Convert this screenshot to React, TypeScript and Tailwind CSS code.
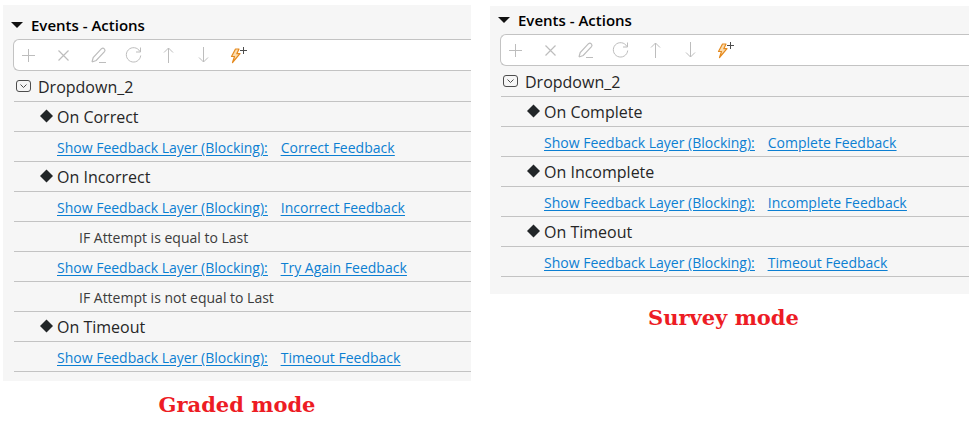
import { useState } from 'react'
import type { ReactNode } from 'react'

type Row =
  | { kind: 'event'; label: string }
  | { kind: 'action'; label: string; target: string }
  | { kind: 'condition'; label: string }

const SHOW_LAYER = 'Show Feedback Layer (Blocking):'

const gradedRows: Row[] = [
  { kind: 'event', label: 'On Correct' },
  { kind: 'action', label: SHOW_LAYER, target: 'Correct Feedback' },
  { kind: 'event', label: 'On Incorrect' },
  { kind: 'action', label: SHOW_LAYER, target: 'Incorrect Feedback' },
  { kind: 'condition', label: 'IF Attempt is equal to Last' },
  { kind: 'action', label: SHOW_LAYER, target: 'Try Again Feedback' },
  { kind: 'condition', label: 'IF Attempt is not equal to Last' },
  { kind: 'event', label: 'On Timeout' },
  { kind: 'action', label: SHOW_LAYER, target: 'Timeout Feedback' },
]

const surveyRows: Row[] = [
  { kind: 'event', label: 'On Complete' },
  { kind: 'action', label: SHOW_LAYER, target: 'Complete Feedback' },
  { kind: 'event', label: 'On Incomplete' },
  { kind: 'action', label: SHOW_LAYER, target: 'Incomplete Feedback' },
  { kind: 'event', label: 'On Timeout' },
  { kind: 'action', label: SHOW_LAYER, target: 'Timeout Feedback' },
]

const tools: { name: string; icon: ReactNode }[] = [
  { name: 'Add', icon: <path d="M12.5 6v13M6 12.5h13" /> },
  { name: 'Delete', icon: <path d="M7.5 7.5l10 10M17.5 7.5l-10 10" strokeWidth="1.2" /> },
  {
    name: 'Edit',
    icon: <path d="M6 19l1.2-4.5 8.3-8.8a2.1 2.1 0 0 1 3 2.9L10.2 17.5 6 19M13 19.5h7" strokeWidth="1.2" />,
  },
  {
    name: 'Refresh',
    icon: <path d="M18.9 8.5a7.2 7.2 0 1 0 .8 4M19.5 4.5v4.500h-4.500" />,
  },
  { name: 'Move up', icon: <path d="M12.5 20V5M8 9.5L12.5 5l4.5 4.5" /> },
  { name: 'Move down', icon: <path d="M12.5 4v15M8 14.5l4.5 4.5 4.5-4.5" /> },
  {
    name: 'Add quick action',
    icon: (
      <>
        <path d="M9.5 6h3.5l-2.2 4.700h3.200L6.500 19.500 8.500 13.500H5.500z" fill="#fbdcae" stroke="#e58a1f" strokeWidth="1.2" strokeLinejoin="round" />
        <path d="M17.5 4v7M14 7.5h7" stroke="#4d4d4d" />
      </>
    ),
  },
]

function Toolbar() {
  return (
    <div role="toolbar" className="ml-[10px] flex h-8 items-center gap-[7px] rounded-l-md border border-r-0 border-[#c3c3c3] bg-white">
      {tools.map(t => (
        <button key={t.name} aria-label={t.name} className="flex h-7 w-7 items-center justify-center">
          <svg width="24" height="24" viewBox="0 0 24 24" fill="none" stroke="#bdbdbd" strokeWidth="1">
            {t.icon}
          </svg>
        </button>
      ))}
    </div>
  )
}

function TreeRow({ row }: { row: Row }) {
  if (row.kind === 'event') return (
    <li className="flex h-[30px] items-center border-b border-[#c3c3c3] pl-[26px] text-base">
      <svg className="mr-1" width="13" height="16" viewBox="0 0 13 16">
        <path d="M6.5 0.5L13 7 6.5 13.5 0 7z" fill="#222628" />
      </svg>
      {row.label}
    </li>
  )
  if (row.kind === 'action') return (
    <li className="flex h-[30px] items-center gap-[13px] border-b border-[#c3c3c3] pl-[43px] pt-0.5 text-sm text-[#0c7fd2] underline underline-offset-2">
      <a href="#action">{row.label}</a>
      <a href="#layer">{row.target}</a>
    </li>
  )
  return (
    <li className="flex h-[30px] items-center border-b border-[#c3c3c3] pl-[65px] pt-0.5 text-sm text-[#3c3c3c]">{row.label}</li>
  )
}

function EventsPanel({ rows, className }: { rows: Row[]; className: string }) {
  const [open, setOpen] = useState(true)

  return (
    <section className={`bg-[#f6f6f6] text-[#262626] ${className}`}>
      <h2 className="pb-1 pl-2 text-[15px] font-semibold text-black">
        <button onClick={() => setOpen(!open)} aria-expanded={open} className="flex h-5 items-center gap-2">
          <svg width="12" height="6" viewBox="0 0 12 6">
            <path d="M0 0h12L6 6z" fill="#111" />
          </svg>
          Events - Actions
        </button>
      </h2>
      {open && (
        <>
          <Toolbar />
          <ul className="ml-[11px]">
            <li className="flex h-[31px] items-center gap-[7px] border-b border-[#c3c3c3] pl-[2px] pt-0.5 text-base">
              <svg className="mb-0.5" width="15" height="12" viewBox="0 0 15 12" fill="none" stroke="#4d4d4d">
                <rect x=".5" y=".5" width="14" height="11" rx="2.5" />
                <path d="M4.5 4.5l3 3 3-3" />
              </svg>
              Dropdown_2
            </li>
            {rows.map((row, i) => <TreeRow key={i} row={row} />)}
          </ul>
        </>
      )}
    </section>
  )
}

export default function App() {
  return (
    <main className="grid min-h-screen grid-cols-[468fr_479fr] items-start gap-[19px] bg-white pl-[3px] pr-1 pt-[5px] font-['Open_Sans','Noto_Sans',sans-serif]">
      <figure>
        <EventsPanel rows={gradedRows} className="pb-[9px] pt-[10px]" />
        <figcaption className="pt-2 text-center font-['DejaVu_Serif',serif] text-[21px] leading-8 font-bold text-[#ed1c24]">Graded mode</figcaption>
      </figure>
      <figure className="pt-px">
        <EventsPanel rows={surveyRows} className="pb-[17px] pt-1" />
        <figcaption className="pr-3 pt-2 text-center font-['DejaVu_Serif',serif] text-[21px] leading-8 font-bold text-[#ed1c24]">Survey mode</figcaption>
      </figure>
    </main>
  )
}
